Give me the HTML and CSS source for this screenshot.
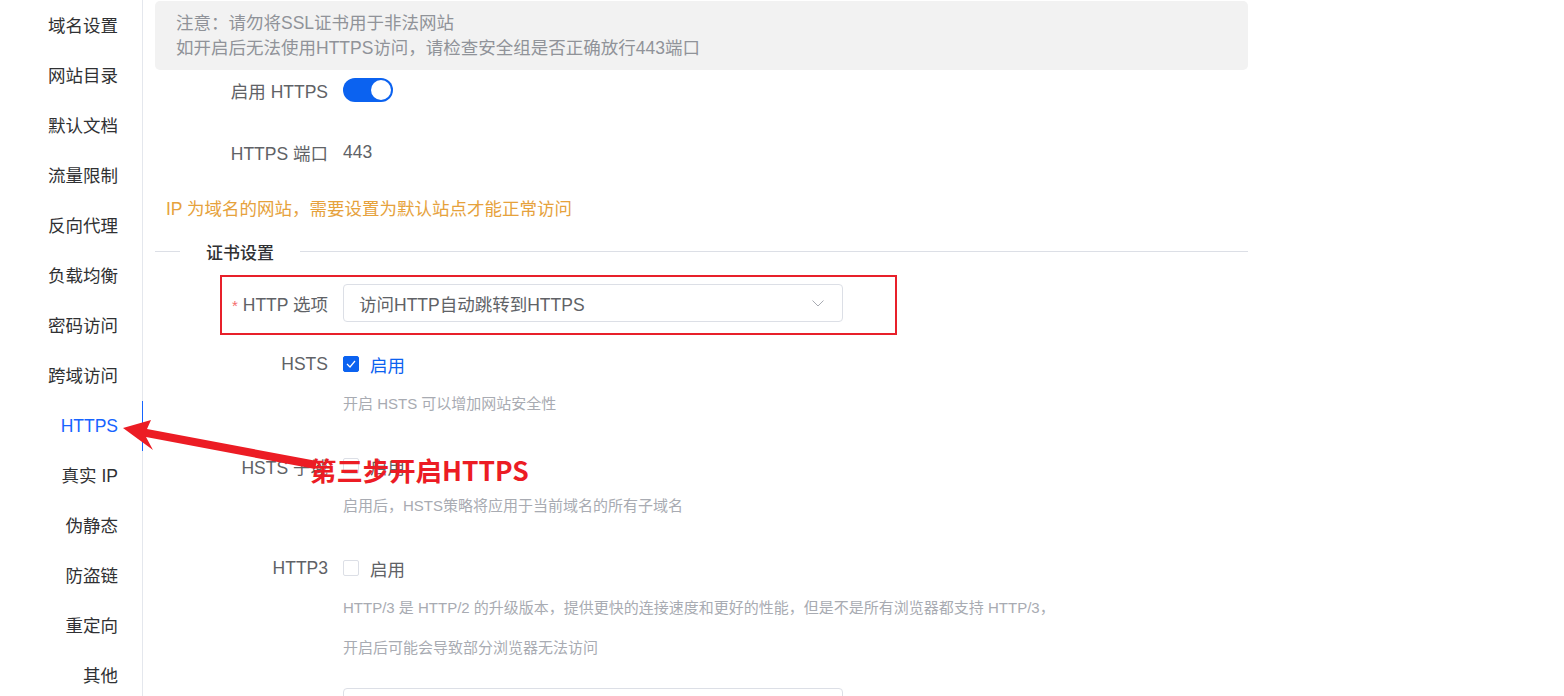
FILE: index.html
```html
<!DOCTYPE html>
<html lang="zh-CN">
<head>
  <meta charset="UTF-8">
  <meta name="viewport" content="width=device-width, initial-scale=1.0">
  <title>HTTPS 设置</title>
  <link rel="stylesheet" href="styles.css">
</head>
<body>
  <div class="page">
    <!-- left menu -->
    <ul class="side-menu">
      <li>域名设置</li>
      <li>网站目录</li>
      <li>默认文档</li>
      <li>流量限制</li>
      <li>反向代理</li>
      <li>负载均衡</li>
      <li>密码访问</li>
      <li>跨域访问</li>
      <li class="active">HTTPS</li>
      <li>真实 IP</li>
      <li>伪静态</li>
      <li>防盗链</li>
      <li>重定向</li>
      <li>其他</li>
    </ul>

    <div class="main">
      <div class="notice">
        <p>注意：请勿将SSL证书用于非法网站</p>
        <p>如开启后无法使用HTTPS访问，请检查安全组是否正确放行443端口</p>
      </div>

      <div class="form-item row-switch">
        <label class="form-label">启用 HTTPS</label>
        <div class="form-control">
          <span class="switch on"><span class="knob"></span></span>
        </div>
      </div>

      <div class="form-item row-port">
        <label class="form-label">HTTPS 端口</label>
        <div class="form-control">443</div>
      </div>

      <p class="warn">IP 为域名的网站，需要设置为默认站点才能正常访问</p>

      <div class="divider">
        <span class="divider-text">证书设置</span>
      </div>

      <div class="form-item row-select">
        <label class="form-label"><span class="required">*</span> HTTP 选项</label>
        <div class="form-control">
          <div class="select">
            <span>访问HTTP自动跳转到HTTPS</span>
            <svg class="chevron" width="12" height="7" viewBox="0 0 12 7"><polyline points="0.5,0.5 6,6 11.5,0.5" fill="none" stroke="#a8abb2" stroke-width="1"/></svg>
          </div>
        </div>
      </div>

      <div class="form-item row-check">
        <label class="form-label">HSTS</label>
        <div class="form-control">
          <span class="checkbox checked">
            <svg width="10" height="8" viewBox="0 0 10 8"><polyline points="1,4 4,7 9,1" fill="none" stroke="#fff" stroke-width="1.2"/></svg>
          </span>
          <span class="check-label blue">启用</span>
        </div>
      </div>
      <p class="help">开启 HSTS 可以增加网站安全性</p>

      <div class="form-item row-check">
        <label class="form-label">HSTS 子域</label>
        <div class="form-control">
          <span class="checkbox"></span>
          <span class="check-label">启用</span>
        </div>
      </div>
      <p class="help">启用后，HSTS策略将应用于当前域名的所有子域名</p>

      <div class="form-item row-check">
        <label class="form-label">HTTP3</label>
        <div class="form-control">
          <span class="checkbox"></span>
          <span class="check-label">启用</span>
        </div>
      </div>
      <p class="help">HTTP/3 是 HTTP/2 的升级版本，提供更快的连接速度和更好的性能，但是不是所有浏览器都支持 HTTP/3，</p>
      <p class="help">开启后可能会导致部分浏览器无法访问</p>

      <div class="form-item row-input">
        <label class="form-label"></label>
        <div class="form-control">
          <div class="input"></div>
        </div>
      </div>
    </div>
  </div>

  <!-- annotations drawn over the screenshot -->
  <div class="mark-box"></div>
  <svg class="mark-arrow" width="1564" height="696" viewBox="0 0 1564 696">
    <polygon points="123,428 151,420 147,429 317,461 315,469 146,437 153,450" fill="#ec1c24"/>
  </svg>
  <div class="mark-text">第三步开启HTTPS</div>
</body>
</html>
```

FILE: styles.css
```css
/* page */
body {
  margin: 0;
  font-family: "Liberation Sans", "Noto Sans CJK SC", sans-serif;
  font-size: 17.5px;
  color: #606266;
  background-color: white;
  overflow: hidden;
  position: relative;
  height: 696px;
}

p {
  margin: 0;
}

.page {
  display: flex;
  align-items: flex-start;
}

/* left menu */
.side-menu {
  list-style: none;
  margin: 0;
  padding: 1px 0 0 0;
  width: 142px;
  min-height: 700px;
  border-right: 1px solid #e4e7ed;
  flex-shrink: 0;
}

.side-menu li {
  position: relative;
  height: 50px;
  line-height: 50px;
  text-align: right;
  padding-right: 24px;
  color: #303133;
}

.side-menu li.active {
  color: #1664ff;
}

.side-menu li.active::after {
  content: "";
  position: absolute;
  top: 0;
  right: -1px;
  width: 1px;
  height: 100%;
  background-color: #1664ff;
}

/* main column */
.main {
  padding: 1px 0 0 12px;
  width: 1093px;
}

.notice {
  background-color: #f2f2f2;
  border-radius: 5px;
  padding: 10px 21px 9px;
  color: #909399;
  line-height: 25px;
}

.form-item {
  display: flex;
  align-items: center;
  height: 32px;
}

.form-label {
  width: 173px;
  padding-right: 15px;
  text-align: right;
  flex-shrink: 0;
  color: #606266;
}

.form-control {
  display: flex;
  align-items: center;
  color: #606266;
}

.row-switch {
  margin-top: 4px;
}

.row-port {
  margin-top: 30px;
}

.row-select {
  height: 38px;
  margin-top: 21px;
}

.row-check {
  margin-top: 26px;
}

.row-input {
  margin-top: 23px;
}

/* switch */
.switch {
  display: inline-block;
  position: relative;
  width: 50px;
  height: 24px;
  border-radius: 12px;
  background-color: #dcdfe6;
}

.switch.on {
  background-color: #0b62f0;
}

.switch .knob {
  position: absolute;
  top: 2px;
  left: 2px;
  width: 20px;
  height: 20px;
  border-radius: 50%;
  background-color: white;
}

.switch.on .knob {
  left: 28px;
}

.warn {
  margin-top: 29px;
  padding-left: 11px;
  line-height: 24px;
  color: #e6a23c;
}

/* section divider */
.divider {
  display: flex;
  align-items: center;
  margin-top: 18px;
  height: 24px;
}

.divider::before {
  content: "";
  width: 25px;
  border-top: 1px solid #dcdfe6;
}

.divider::after {
  content: "";
  flex: 1;
  border-top: 1px solid #dcdfe6;
}

.divider-text {
  padding: 0 26px;
  color: #303133;
  font-weight: 500;
  font-size: 17px;
}

.required {
  color: #f56c6c;
  font-size: 15px;
}

/* select */
.select {
  display: flex;
  align-items: center;
  justify-content: space-between;
  box-sizing: border-box;
  width: 500px;
  height: 38px;
  padding: 0 18px 0 15px;
  border: 1px solid #dcdfe6;
  border-radius: 4px;
  color: #606266;
}

/* checkbox */
.checkbox {
  display: inline-flex;
  align-items: center;
  justify-content: center;
  box-sizing: border-box;
  width: 16px;
  height: 16px;
  border: 1px solid #dcdfe6;
  border-radius: 2px;
  background-color: white;
}

.checkbox.checked {
  background-color: #0b62f0;
  border-color: #0b62f0;
}

.check-label {
  margin-left: 11px;
  color: #606266;
}

.check-label.blue {
  color: #0b62f0;
}

.help {
  margin-top: 4px;
  padding-left: 188px;
  font-size: 15px;
  line-height: 40px;
  color: #a8abb2;
}

.help + .help {
  margin-top: 0;
}

.input {
  box-sizing: border-box;
  width: 500px;
  height: 38px;
  border: 1px solid #dcdfe6;
  border-radius: 4px;
}

/* annotations */
.mark-box {
  position: absolute;
  left: 220px;
  top: 275px;
  width: 677px;
  height: 60px;
  box-sizing: border-box;
  border: 2px solid #e8202a;
}

.mark-arrow {
  position: absolute;
  left: 0;
  top: 0;
  pointer-events: none;
}

.mark-text {
  position: absolute;
  left: 310px;
  top: 454px;
  line-height: 32px;
  font-size: 26.4px;
  font-weight: bold;
  color: #ec1c24;
  font-family: "Noto Sans CJK SC", sans-serif;
}
```
